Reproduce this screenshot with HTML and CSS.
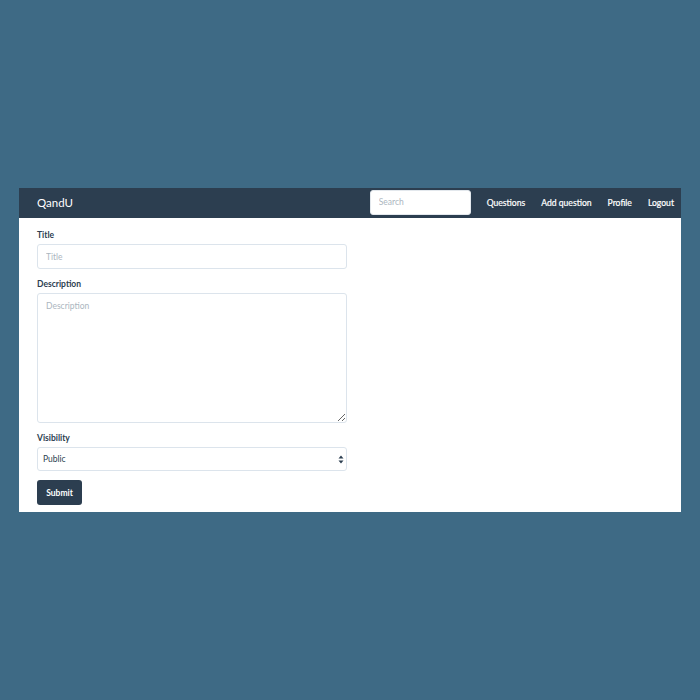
FILE: index.html
```html
<!DOCTYPE html>
<html>
<head>
<meta charset="utf-8">
<link rel="stylesheet" href="styles.css">
</head>
<body>
<div class="card">
  <nav class="navbar">
    <span class="brand">QandU</span>
    <div class="nav-right">
      <input class="search" type="text" placeholder="Search">
      <a class="nav-link">Questions</a>
      <a class="nav-link">Add question</a>
      <a class="nav-link">Profile</a>
      <a class="nav-link">Logout</a>
    </div>
  </nav>
  <form class="form">
    <label class="label">Title</label>
    <input class="field" type="text" placeholder="Title">
    <label class="label">Description</label>
    <textarea class="field area" placeholder="Description"></textarea>
    <label class="label">Visibility</label>
    <div class="select-wrap">
      <select class="field select"><option>Public</option></select>
      <svg class="arrows" width="6" height="9" viewBox="0 0 6 9"><path d="M3 0.5 L5.5 3.5 H0.5Z M3 8.5 L5.5 5.5 H0.5Z" fill="#2c3e50"/></svg>
    </div>
    <button class="btn" type="button">Submit</button>
  </form>
</div>
</body>
</html>
```
FILE: styles.css
```css
html, body {
  margin: 0;
  padding: 0;
}
body {
  background: #3e6a85;
  font-family: Lato, "Open Sans", sans-serif;
  padding: 188px 19px 0 19px;
  height: 700px;
  box-sizing: border-box;
}
.card {
  width: 662px;
  background: #fff;
}
.navbar {
  height: 30px;
  background: #2c3e50;
  display: flex;
  justify-content: space-between;
  align-items: center;
  padding: 0 7px 0 18px;
  box-sizing: border-box;
}
.brand {
  color: #fff;
  font-size: 11.5px;
  margin-top: -2px;
}
.nav-right {
  display: flex;
  align-items: center;
  gap: 16px;
  height: 100%;
}
.search {
  width: 101px;
  height: 25px;
  box-sizing: border-box;
  border: 1px solid #e3e8ed;
  border-radius: 3px;
  padding: 0 8px;
  font-family: inherit;
  font-size: 8.5px;
  margin-top: -2px;
  outline: none;
}
.search::placeholder { color: #acb6c0; }
.nav-link {
  color: #fff;
  font-size: 8.6px;
  font-weight: 400;
  -webkit-text-stroke: 0.2px #fff;
  margin-top: -1px;
}
.form {
  display: flex;
  flex-direction: column;
  align-items: flex-start;
  padding: 11px 18px 7px 18px;
}
.label {
  font-size: 8.5px;
  font-weight: 700;
  color: #2c3e50;
  line-height: 12px;
  margin-bottom: 3px;
}
.field {
  width: 310px;
  height: 25px;
  box-sizing: border-box;
  border: 1px solid #dce4ec;
  border-radius: 3px;
  font-family: inherit;
  font-size: 8.5px;
  color: #2c3e50;
  padding: 0 8px;
  margin: 0 0 9px 0;
  outline: none;
  background: #fff;
}
.field::placeholder { color: #acb6c0; }
.area {
  height: 130px;
  padding: 7px 8px;
  resize: vertical;
  display: block;
}
.select-wrap {
  position: relative;
  margin-bottom: 9px;
}
.select {
  appearance: none;
  -webkit-appearance: none;
  height: 24px;
  padding-left: 5px;
  margin: 0;
  display: block;
}
.arrows {
  position: absolute;
  right: 3px;
  top: 8px;
}
.btn {
  width: 45px;
  height: 25px;
  background: #2c3e50;
  color: #fff;
  border: none;
  border-radius: 3px;
  font-family: inherit;
  font-size: 8.5px;
  font-weight: 700;
  padding: 0;
}
```
